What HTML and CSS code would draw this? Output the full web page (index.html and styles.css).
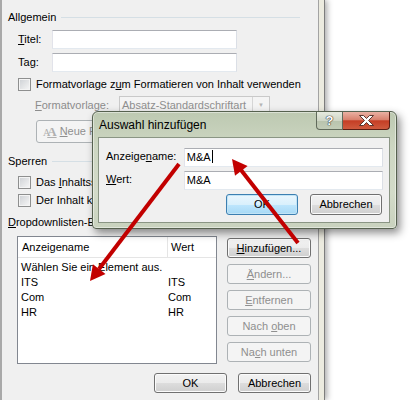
FILE: index.html
```html
<!DOCTYPE html>
<html lang="de">
<head>
    <meta charset="UTF-8">
    <title>Eigenschaften für Inhaltssteuerelemente</title>
    <link rel="stylesheet" href="styles.css">
</head>
<body>
    <div class="win">
        <div class="group"><span>Allgemein</span><i class="rule"></i></div>
        <div class="field first">
            <label><u>T</u>itel:</label>
            <span class="edit"></span>
        </div>
        <div class="field">
            <label>Ta<u>g</u>:</label>
            <span class="edit"></span>
        </div>
        <div class="check"><span class="box"></span><span>Formatvorlage z<u>u</u>m Formatieren von Inhalt verwenden</span></div>
        <div class="field dim">
            <label class="wide"><u>F</u>ormatvorlage:</label>
            <span class="combo"><span class="combo-text">Absatz-Standardschriftart</span><span class="drop">&#9660;</span></span>
        </div>
        <div class="btn off neue"><span class="ico">A<b>A</b></span><span><u>N</u>eue Formatvorlage...</span></div>

        <div class="group sperren"><span>Sperren</span><i class="rule"></i></div>
        <div class="check c1"><span class="box"></span><span>Das <u>I</u>nhaltssteuerelement kann nicht gelöscht werden</span></div>
        <div class="check c2"><span class="box"></span><span>Der Inhalt kann nicht bearbeitet werden</span></div>

        <div class="group dd-head"><span><u>D</u>ropdownlisten-Eigenschaften</span><i class="rule"></i></div>
        <div class="dd">
            <div class="list">
                <div class="list-head">
                    <span class="col1">Anzeigename</span>
                    <span class="col2">Wert</span>
                </div>
                <div class="row"><span class="cell">Wählen Sie ein Element aus.</span><span></span></div>
                <div class="row"><span class="cell">ITS</span><span>ITS</span></div>
                <div class="row"><span class="cell">Com</span><span>Com</span></div>
                <div class="row"><span class="cell">HR</span><span>HR</span></div>
            </div>
            <div class="side">
                <div class="btn"><u>H</u>inzufügen...</div>
                <div class="btn off"><u>Ä</u>ndern...</div>
                <div class="btn off"><u>E</u>ntfernen</div>
                <div class="btn off">Nach <u>o</u>ben</div>
                <div class="btn off">Na<u>c</u>h unten</div>
            </div>
        </div>
        <div class="foot">
            <div class="btn">OK</div>
            <div class="btn">Abbrechen</div>
        </div>
    </div>

    <div class="dlg">
        <div class="dlg-bar">
            <span class="dlg-title">Auswahl hinzufügen</span>
            <span class="cap help">?</span>
            <span class="cap close">
                <svg width="17" height="11" viewBox="0 0 17 11">
                    <path d="M1.5 0.5h4l3 3 3-3h4l-5 5 5 5h-4l-3-3-3 3h-4l5-5z" fill="#fff" stroke="#4a2a24" stroke-width="0.9" stroke-linejoin="round"/>
                </svg>
            </span>
        </div>
        <div class="dlg-body">
            <div class="dlg-row">
                <label>Anzeige<u>n</u>ame:</label>
                <span class="edit wide-edit">M&amp;A<i class="caret"></i></span>
            </div>
            <div class="dlg-row">
                <label><u>W</u>ert:</label>
                <span class="edit wide-edit">M&amp;A</span>
            </div>
            <div class="dlg-foot">
                <div class="btn default">OK</div>
                <div class="btn">Abbrechen</div>
            </div>
        </div>
    </div>

    <svg class="marks" width="413" height="400" viewBox="0 0 413 400">
        <line x1="179" y1="164" x2="99" y2="269" stroke="#c20000" stroke-width="4"/>
        <polygon points="90,281 92.9,264.2 105.5,274" fill="#c20000"/>
        <line x1="298" y1="243" x2="241" y2="170" stroke="#c20000" stroke-width="4"/>
        <polygon points="232,159 247.6,165.9 235,175.7" fill="#c20000"/>
    </svg>
</body>
</html>
```

FILE: styles.css
```css
body {
    margin: 0;
    background: #fff;
    font-family: "Liberation Sans", Arial, sans-serif;
    font-size: 11px;
    line-height: 15px;
    color: #000;
    overflow: hidden;
}
u {
    text-decoration: underline;
    text-underline-offset: 1px;
}
.win {
    box-sizing: border-box;
    width: 319px;
    height: 400px;
    padding: 10px 0 0 6px;
    background: #f0f0f0;
    border-left: 2px solid #a9a9a9;
    border-right: 1px solid #a3a3a3;
    box-shadow: 5px 0 0 #ecebdf, 6px 0 0 #7d7d7d, 8px 0 6px rgba(0,0,0,0.35);
}
.group {
    display: flex;
    align-items: center;
    gap: 5px;
    height: 15px;
    margin-right: 18px;
    white-space: nowrap;
}
.rule {
    flex: 1;
    border-top: 1px solid #d5dfe5;
}
.field {
    display: flex;
    align-items: center;
    margin-top: 4px;
    padding-left: 10px;
}
.field.first {
    margin-top: 5px;
}
.field label {
    width: 34px;
}
.edit {
    box-sizing: border-box;
    width: 185px;
    height: 19px;
    background: #fff;
    border: 1px solid #abadb3;
    border-color: #abadb3 #dbdfe6 #e3e9ef #e2e3ea;
}
.check {
    display: flex;
    align-items: center;
    gap: 5px;
    height: 15px;
    margin-top: 5px;
    padding-left: 10px;
    white-space: nowrap;
}
.box {
    flex-shrink: 0;
    box-sizing: border-box;
    width: 13px;
    height: 13px;
    border: 1px solid #8e8f8f;
    background: linear-gradient(135deg, #cdd0d4, #f7f7f7);
    box-shadow: inset 0 0 0 1px #f4f4f4;
}
.dim {
    color: #8c8c8c;
}
.field label.wide {
    width: 84px;
    padding-left: 17px;
}
.combo {
    box-sizing: border-box;
    display: flex;
    width: 151px;
    height: 18px;
    border: 1px solid #c9c9c9;
    background: #f4f4f4;
    color: #8f8f8f;
}
.combo-text {
    flex: 1;
    padding-left: 2px;
    line-height: 16px;
    white-space: nowrap;
    overflow: hidden;
}
.drop {
    width: 16px;
    border-left: 1px solid #d6d6d6;
    font-size: 6px;
    line-height: 16px;
    text-align: center;
    color: #b5b5b5;
}
.btn {
    box-sizing: border-box;
    height: 20px;
    border: 1px solid #707070;
    border-radius: 3px;
    background: linear-gradient(#f2f2f2 0%, #ebebeb 50%, #dddddd 51%, #cfcfcf 100%);
    box-shadow: inset 0 0 0 1px #fbfbfb;
    text-align: center;
    line-height: 18px;
    white-space: nowrap;
}
.btn.off {
    border-color: #adb2b5;
    background: #f4f4f4;
    box-shadow: none;
    color: #8f8f8f;
}
.neue {
    display: flex;
    align-items: center;
    gap: 3px;
    width: 150px;
    height: 23px;
    margin: 6px 0 0 28px;
    padding-left: 6px;
    line-height: 21px;
}
.ico {
    font-family: "Liberation Serif", serif;
    font-size: 10px;
    color: #b0b0b0;
    letter-spacing: -3px;
}
.ico b {
    font-size: 13px;
    letter-spacing: 0;
    text-decoration: underline;
}
.sperren {
    margin-top: 11px;
}
.check.c1 {
    margin-top: 6px;
}
.check.c2 {
    margin-top: 3px;
}
.dd-head {
    margin-top: 7px;
}
.dd {
    display: flex;
    align-items: flex-start;
    margin-top: 6px;
    padding-left: 9px;
}
.list {
    box-sizing: border-box;
    width: 200px;
    height: 128px;
    border: 1px solid #828790;
    background: #fff;
}
.list-head {
    display: flex;
    height: 20px;
    line-height: 20px;
    border-bottom: 1px solid #e5e5e5;
}
.col1 {
    width: 145px;
    padding-left: 4px;
    border-right: 1px solid #e5e5e5;
}
.col2 {
    padding-left: 3px;
}
.list-head + .row {
    margin-top: 2px;
}
.row {
    display: flex;
    padding-left: 3px;
}
.cell {
    width: 147px;
    white-space: nowrap;
}
.side {
    display: flex;
    flex-direction: column;
    gap: 6px;
    width: 84px;
    margin: 2px 0 0 10px;
}
.foot {
    display: flex;
    justify-content: flex-end;
    gap: 11px;
    margin-top: 9px;
    padding-right: 7px;
}
.foot .btn {
    width: 73px;
}

/* overlay dialog */
.dlg {
    position: absolute;
    left: 92px;
    top: 111px;
    box-sizing: border-box;
    width: 305px;
    height: 118px;
    display: flex;
    flex-direction: column;
    padding: 0 6px 5px 5px;
    border: 1px solid #56614f;
    border-radius: 6px 6px 4px 4px;
    background: linear-gradient(#bdc9b1, #cdd6c2 30%, #d3dbc9 70%, #c9d2be);
    box-shadow: inset 0 0 0 1px rgba(255,255,255,0.45), 3px 4px 9px rgba(0,0,0,0.45);
}
.dlg-bar {
    display: flex;
    align-items: flex-start;
    height: 25px;
}
.dlg-title {
    flex: 1;
    padding: 6px 0 0 1px;
    font-size: 12px;
    line-height: 15px;
}
.cap {
    box-sizing: border-box;
    height: 18px;
    display: flex;
    align-items: center;
    justify-content: center;
}
.help {
    width: 27px;
    border: 1px solid #606a5b;
    border-top: none;
    border-radius: 0 0 0 4px;
    background: linear-gradient(#e6eadf, #cfd6c6 50%, #b8c3ad 51%, #c2ccb7);
    color: #fff;
    font-weight: bold;
    font-size: 13px;
    text-shadow: 0 0 1px #333, 0 0 1px #333, 0 0 1px #333;
}
.close {
    width: 47px;
    border: 1px solid #5a1d14;
    border-left: none;
    border-top: none;
    border-radius: 0 0 4px 0;
    background: linear-gradient(#eab1a3, #d9826f 45%, #c53e25 52%, #cf5a3e);
}
.dlg-body {
    flex: 1;
    padding: 10px 6px 0 7px;
    background: #f0f0f0;
    border: 1px solid #8a9584;
}
.dlg-row {
    display: flex;
    align-items: flex-start;
    margin-bottom: 4px;
}
.dlg-row label {
    width: 78px;
    padding-top: 1px;
}
.wide-edit {
    width: 200px;
    padding-left: 2px;
    line-height: 17px;
}
.caret {
    display: inline-block;
    width: 1px;
    height: 13px;
    margin-left: 1px;
    vertical-align: -2px;
    background: #000;
}
.dlg-foot {
    display: flex;
    justify-content: flex-end;
    gap: 12px;
    padding-right: 1px;
}
.dlg-foot .btn {
    width: 72px;
    height: 21px;
    line-height: 19px;
}
.btn.default {
    border-color: #3c7fb1;
    background: linear-gradient(#eaf6fd 0%, #d9f0fc 50%, #bee6fd 51%, #a7d9f5 100%);
    box-shadow: inset 0 0 0 1px #c2e4f6;
}
.marks {
    position: absolute;
    left: 0;
    top: 0;
    pointer-events: none;
}
```
